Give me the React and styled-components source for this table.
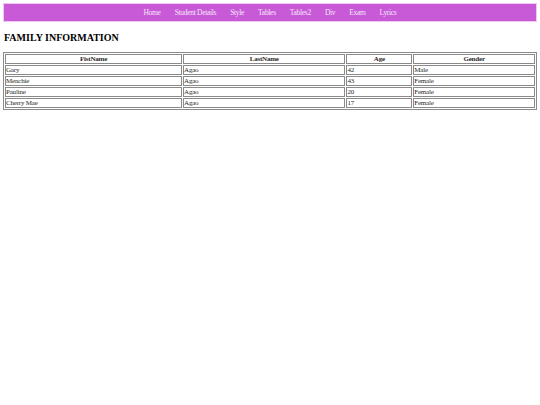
import React from 'react'
import styled, {createGlobalStyle} from 'styled-components'

const GlobalStyle = createGlobalStyle`
  body {
    margin: 0;
    padding: 3px;
    background: #fff;
    font-family: "Liberation Serif", "Times New Roman", serif;
    color: #000;
  }
`

const Navbar = styled.nav`
  display: flex;
  justify-content: center;
  align-items: center;
  gap: 14px;
  height: 17px;
  background: #c85ad8;
  border: 1px solid #f2c6f2;
`

const NavItem = styled.a`
  font-size: 7.5px;
  letter-spacing: -0.3px;
  color: #f6e6f8;
  text-decoration: none;
`

const Heading = styled.h1`
  margin: 9px 0 0 1px;
  font-size: 10px;
  font-weight: bold;
  line-height: 14px;
`

const Table = styled.table`
  width: 100%;
  margin-top: 7px;
  border: 1px solid #8a8a8a;
  border-spacing: 1px;
  font-size: 7px;
  letter-spacing: -0.2px;
  color: #2a2a2a;
`

const Cell = styled.td`
  border: 1px solid #8a8a8a;
  height: 8px;
  padding: 0;
  line-height: 8px;
  text-align: ${p => (p.head ? 'center' : 'left')};
  font-weight: ${p => (p.head ? 'bold' : 'normal')};
  width: ${p => p.w || 'auto'};
`

const links = ['Home', 'Student Details', 'Style', 'Tables', 'Tables2', 'Div', 'Exam', 'Lyrics']

const family = [
  ['Gary', 'Agao', '42', 'Male'],
  ['Menchie', 'Agao', '43', 'Female'],
  ['Pauline', 'Agao', '20', 'Female'],
  ['Cherry Mae', 'Agao', '17', 'Female'],
]

const widths = ['33.6%', '30.8%', '12.5%', '23.1%']

export default function App() {
  return (
    <>
      <GlobalStyle />
      <Navbar>
        {links.map(l => (
          <NavItem key={l} href="#">{l}</NavItem>
        ))}
      </Navbar>
      <Heading>FAMILY INFORMATION</Heading>
      <Table>
        <thead>
          <tr>
            {['FistName', 'LastName', 'Age', 'Gender'].map((h, i) => (
              <Cell as="th" head key={h} w={widths[i]}>{h}</Cell>
            ))}
          </tr>
        </thead>
        <tbody>
          {family.map(row => (
            <tr key={row[0]}>
              {row.map((c, i) => (
                <Cell key={i}>{c}</Cell>
              ))}
            </tr>
          ))}
        </tbody>
      </Table>
    </>
  )
}
